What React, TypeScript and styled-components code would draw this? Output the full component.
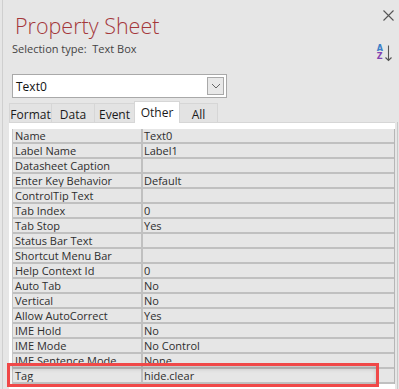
import React from "react";
import styled, { createGlobalStyle } from "styled-components";

const GlobalStyle = createGlobalStyle`
  html, body {
    margin: 0;
    padding: 0;
    background: #e6e6e6;
  }
  body {
    font-family: "Open Sans", "Noto Sans", "DejaVu Sans", sans-serif;
  }
`;

const rows: [string, string][] = [
  ["Name", "Text0"],
  ["Label Name", "Label1"],
  ["Datasheet Caption", ""],
  ["Enter Key Behavior", "Default"],
  ["ControlTip Text", ""],
  ["Tab Index", "0"],
  ["Tab Stop", "Yes"],
  ["Status Bar Text", ""],
  ["Shortcut Menu Bar", ""],
  ["Help Context Id", "0"],
  ["Auto Tab", "No"],
  ["Vertical", "No"],
  ["Allow AutoCorrect", "Yes"],
  ["IME Hold", "No"],
  ["IME Mode", "No Control"],
  ["IME Sentence Mode", "None"],
  ["Tag", "hide.clear"],
];

const tabs = [
  { label: "Format", width: 43 },
  { label: "Data", width: 44 },
  { label: "Event", width: 41 },
  { label: "Other", width: 46 },
  { label: "All", width: 39 },
];

export default function App() {
  return (
    <>
      <GlobalStyle />
      <Pane>
        <Header>
          <TitleBlock>
            <Title>Property Sheet</Title>
            <Selection>
              Selection type:&nbsp;&nbsp;Text Box
            </Selection>
          </TitleBlock>
          <HeaderTools>
            <CloseButton aria-label="Close">
              <svg width="11" height="11" viewBox="0 0 11 11">
                <path d="M0.5 0.5 L10.5 10.5 M10.5 0.5 L0.5 10.5" stroke="#555" strokeWidth="1.1" fill="none" />
              </svg>
            </CloseButton>
            <SortIcon>
              <SortLetters>
                <SortLetter $color="#3c7fc6">A</SortLetter>
                <SortLetter $color="#8444b0">Z</SortLetter>
              </SortLetters>
              <svg width="7" height="17" viewBox="0 0 7 17">
                <path d="M3.5 0.5 V15.5 M0.5 12.5 L3.5 15.5 L6.5 12.5" stroke="#555" strokeWidth="1.1" fill="none" />
              </svg>
            </SortIcon>
          </HeaderTools>
        </Header>

        <Combo>
          <ComboText>Text0</ComboText>
          <ComboButton>
            <svg width="10" height="6" viewBox="0 0 10 6">
              <path d="M1 1 L5 5 L9 1" stroke="#666" strokeWidth="1" fill="none" />
            </svg>
          </ComboButton>
        </Combo>

        <TabStrip>
          {tabs.map((t) => (
            <Tab key={t.label} $active={t.label === "Other"} $width={t.width}>
              {t.label}
            </Tab>
          ))}
        </TabStrip>

        <Panel>
          <Grid>
            {rows.map(([k, v]) => (
              <Row key={k}>
                <Cell $label>{k}</Cell>
                <Cell>{v}</Cell>
              </Row>
            ))}
          </Grid>
          <Highlight />
        </Panel>
      </Pane>
    </>
  );
}

const Pane = styled.div`
  position: relative;
  width: 399px;
  height: 389px;
  overflow: hidden;
  background: #e6e6e6;
  &::before {
    content: "";
    position: absolute;
    left: 2px;
    top: 0;
    bottom: 0;
    width: 1px;
    background: #cfcfcf;
  }
`;

const Header = styled.div`
  display: flex;
  justify-content: space-between;
  height: 74px;
  box-sizing: border-box;
`;

const TitleBlock = styled.div`
  padding: 12px 0 0 12px;
`;

const Title = styled.div`
  font-size: 21.5px;
  font-weight: 300;
  color: #a4373a;
  line-height: 28px;
  padding-left: 3px;
`;

const Selection = styled.div`
  font-size: 11px;
  color: #444;
  line-height: 15px;
  margin-top: 1px;
`;

const HeaderTools = styled.div`
  display: flex;
  flex-direction: column;
  align-items: flex-end;
  padding: 10px 5px 0 0;
`;

const CloseButton = styled.div`
  width: 11px;
  height: 11px;
  display: flex;
`;

const SortIcon = styled.div`
  display: flex;
  align-items: flex-start;
  gap: 2px;
  margin-top: 24px;
  margin-right: 2px;
`;

const SortLetters = styled.div`
  display: flex;
  flex-direction: column;
  font-family: "DejaVu Sans", sans-serif;
  font-weight: 700;
  font-size: 8px;
  line-height: 8px;
`;

const SortLetter = styled.span<{ $color: string }>`
  color: ${(p) => p.$color};
`;

const Combo = styled.div`
  margin-left: 12px;
  width: 215px;
  height: 24px;
  box-sizing: border-box;
  border: 1px solid #a9a9a9;
  background: #fff;
  display: flex;
  align-items: center;
  justify-content: space-between;
  padding: 0 2px 0 3px;
`;

const ComboText = styled.span`
  font-size: 12px;
  color: #111;
`;

const ComboButton = styled.div`
  width: 17px;
  height: 18px;
  box-sizing: border-box;
  border: 1px solid #a9a9a9;
  background: #e8e8e8;
  display: flex;
  align-items: center;
  justify-content: center;
`;

const TabStrip = styled.div`
  display: flex;
  align-items: flex-end;
  margin: 3px 0 0 10px;
  height: 21px;
`;

const Tab = styled.div<{ $active?: boolean; $width: number }>`
  width: ${(p) => p.$width}px;
  height: ${(p) => (p.$active ? 22 : 19)}px;
  box-sizing: border-box;
  border: 1px solid #d6d6d6;
  border-bottom: none;
  margin-left: -1px;
  background: ${(p) => (p.$active ? "#fff" : "#e3e3e3")};
  font-size: 12px;
  color: #1a1a1a;
  display: flex;
  align-items: center;
  justify-content: center;
  padding-top: ${(p) => (p.$active ? 0 : 2)}px;
  position: relative;
  z-index: ${(p) => (p.$active ? 1 : 0)};
  margin-bottom: ${(p) => (p.$active ? -1 : 0)}px;
`;

const Panel = styled.div`
  margin-left: 9px;
  width: 386px;
  background: #fff;
  border-top: 1px solid #d6d6d6;
  padding: 6px 0 0 3px;
  box-sizing: border-box;
  height: 270px;
  box-shadow: 2px 0 0 #e6e6e6, 3px 0 0 #c8c8c8;
`;

const Grid = styled.div`
  width: 381px;
  border-left: 1px solid #c6c6c6;
  border-right: 1px solid #b6b6b6;
  background: #e6e6e6;
`;

const Row = styled.div`
  display: grid;
  grid-template-columns: 130px 1fr;
  height: 15px;
  box-sizing: border-box;
  border-bottom: 2px solid #c0c0c0;
`;

const Cell = styled.div<{ $label?: boolean }>`
  font-size: 11px;
  line-height: 13px;
  color: #2e2e2e;
  padding-left: ${(p) => (p.$label ? 2 : 1)}px;
  white-space: nowrap;
  overflow: hidden;
  border-right: ${(p) => (p.$label ? "2px solid #c0c0c0" : "none")};
`;

const Highlight = styled.div`
  position: absolute;
  left: 7px;
  top: 363px;
  width: 372px;
  height: 24px;
  box-sizing: border-box;
  border: 3px solid #f04848;
  box-shadow: inset 0 3px 4px rgba(0, 0, 0, 0.15);
  pointer-events: none;
`;
